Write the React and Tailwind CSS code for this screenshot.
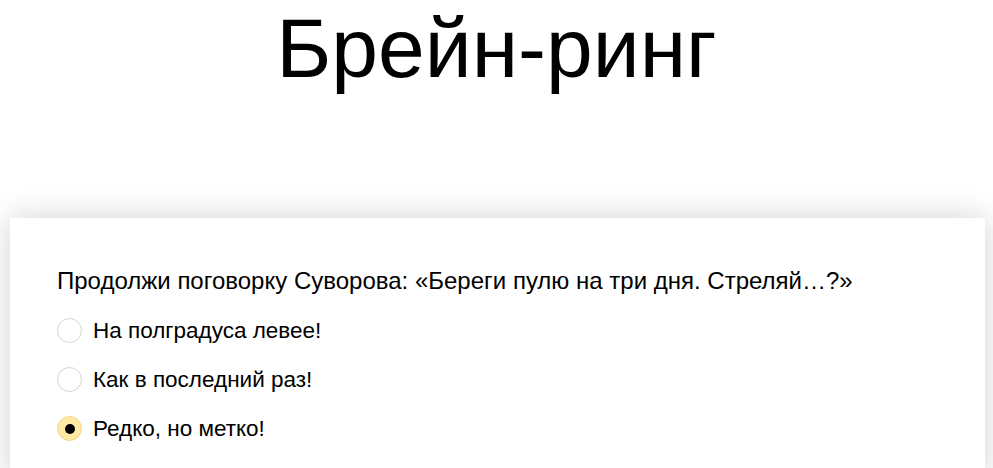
import React, { useState } from "react";

const options = ["На полградуса левее!", "Как в последний раз!", "Редко, но метко!"];

export default function App() {
  const [picked, setPicked] = useState(2);

  return (
    <div className="min-h-[468px] bg-white overflow-hidden" style={{ fontFamily: '"Liberation Sans", Arial, sans-serif' }}>
      <h1 className="pt-[6px] text-center text-[84px] leading-[84px] font-normal text-black">Брейн-ринг</h1>
      <div className="mt-[128px] ml-[10px] w-[975px] bg-white px-[47px] pt-[51px] pb-[40px] shadow-[0_0_30px_rgba(0,0,0,0.18)]">
        <p className="text-[24px] leading-[24px] text-black">
          Продолжи поговорку Суворова: «Береги пулю на три дня. Стреляй…?»
        </p>
        <div className="mt-[25px] flex flex-col gap-[24px]">
          {options.map((o, i) => (
            <label key={o} className="flex h-[25px] items-center gap-[11px] cursor-pointer" onClick={() => setPicked(i)}>
              {picked === i ? (
                <span className="flex h-[25px] w-[25px] shrink-0 items-center justify-center rounded-full border border-[#efd78a] bg-[#ffeaa3]">
                  <span className="h-[10px] w-[10px] rounded-full bg-black" />
                </span>
              ) : (
                <span className="h-[25px] w-[25px] shrink-0 rounded-full border border-[#d4d4d4] bg-white" />
              )}
              <span className="text-[22.5px] leading-[25px] text-black">{o}</span>
            </label>
          ))}
        </div>
      </div>
    </div>
  );
}
